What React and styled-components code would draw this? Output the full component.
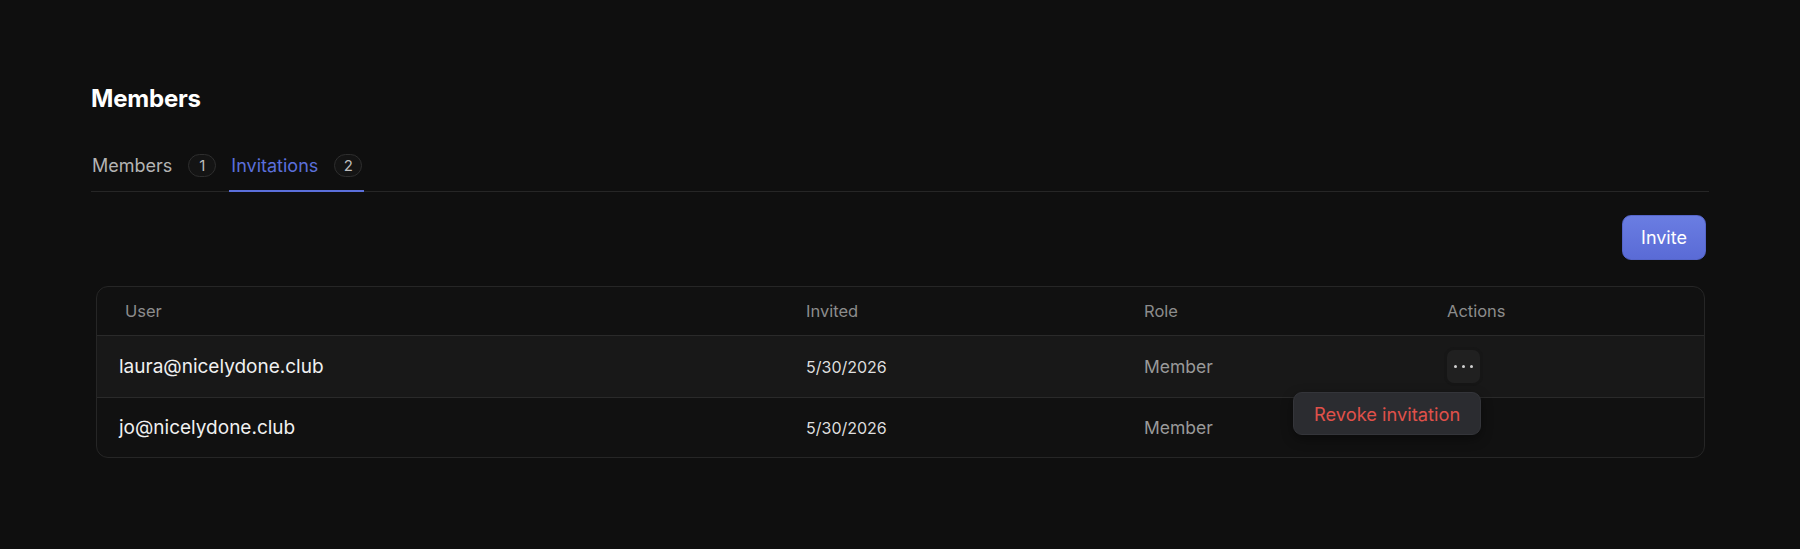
import styled, { createGlobalStyle } from "styled-components";

const GlobalStyle = createGlobalStyle`
  html, body {
    margin: 0;
    background: #0f0f0f;
    font-family: Inter, "Noto Sans", sans-serif;
    color: #f2f2f2;
  }
`;

const invitations = [
  { email: "laura@nicelydone.club", invited: "5/30/2026", role: "Member", active: true },
  { email: "jo@nicelydone.club", invited: "5/30/2026", role: "Member" },
];

export default function App() {
  return (
    <>
      <GlobalStyle />
      <Page>
        <Title>Members</Title>
        <Tabs>
          <Tab>
            Members <Count>1</Count>
          </Tab>
          <Tab $active>
            Invitations <Count>2</Count>
          </Tab>
        </Tabs>
        <Toolbar>
          <InviteButton>Invite</InviteButton>
        </Toolbar>
        <Table>
          <HeadRow>
            <HeadCell $first>User</HeadCell>
            <HeadCell>Invited</HeadCell>
            <HeadCell>Role</HeadCell>
            <HeadCell>Actions</HeadCell>
          </HeadRow>
          {invitations.map((inv) => (
            <Row key={inv.email} $active={inv.active}>
              <Email>{inv.email}</Email>
              <DateCell>{inv.invited}</DateCell>
              <RoleCell>{inv.role}</RoleCell>
              <ActionCell>
                {inv.active && (
                  <>
                    <DotsButton aria-label="Actions">
                      <Dot />
                      <Dot />
                      <Dot />
                    </DotsButton>
                    <Menu>
                      <MenuItem>Revoke invitation</MenuItem>
                    </Menu>
                  </>
                )}
              </ActionCell>
            </Row>
          ))}
        </Table>
      </Page>
    </>
  );
}

const Page = styled.div`
  padding: 84px 91px 0 91px;
  width: 1618px;
`;

const Title = styled.h1`
  margin: 0;
  font-size: 24px;
  font-weight: 700;
  line-height: 30px;
  color: #ffffff;
  letter-spacing: -0.2px;
`;

const Tabs = styled.div`
  display: flex;
  margin-top: 30px;
  border-bottom: 1px solid #262626;
`;

const Tab = styled.div`
  display: flex;
  align-items: center;
  gap: 16px;
  height: 48px;
  box-sizing: border-box;
  padding: 0 ${(p) => (p.$active ? "2px" : "13px")} 6px ${(p) => (p.$active ? "2px" : "1px")};
  font-size: 18px;
  color: ${(p) => (p.$active ? "#5b6fdb" : "#b4b4b4")};
  box-shadow: ${(p) => (p.$active ? "inset 0 -2px 0 #5b6fdb" : "none")};
  margin-bottom: -1px;
`;

const Count = styled.span`
  display: inline-flex;
  align-items: center;
  justify-content: center;
  width: 28px;
  height: 23px;
  box-sizing: border-box;
  border: 1px solid #2e2e2e;
  border-radius: 12px;
  font-size: 15px;
  color: #bdbdbd;
  background: #141414;
`;

const Toolbar = styled.div`
  display: flex;
  justify-content: flex-end;
  padding: 23px 3px 0 0;
`;

const InviteButton = styled.button`
  width: 84px;
  height: 45px;
  border: 1px solid #5565c9;
  border-radius: 9px;
  background: linear-gradient(#6a7de2, #5a6bd6);
  color: #ffffff;
  font-family: Inter, sans-serif;
  font-size: 18px;
`;

const Table = styled.div`
  margin: 26px 4px 0 5px;
  border: 1px solid #262626;
  border-radius: 12px;
  background: #111111;
`;

const columns = "709px 338px 303px 1fr";

const HeadRow = styled.div`
  display: grid;
  grid-template-columns: ${columns};
  height: 48px;
  align-items: center;
  border-bottom: 1px solid #2a2a2a;
`;

const HeadCell = styled.div`
  font-size: 16.5px;
  color: #8c8c8c;
  padding-left: ${(p) => (p.$first ? "28px" : "0")};
`;

const Row = styled.div`
  display: grid;
  grid-template-columns: ${columns};
  height: ${(p) => (p.$active ? "61px" : "59px")};
  align-items: center;
  background: ${(p) => (p.$active ? "#181818" : "transparent")};
  border-bottom: ${(p) => (p.$active ? "1px solid #2a2a2a" : "none")};
  border-radius: ${(p) => (p.$active ? "0" : "0 0 12px 12px")};
`;

const Email = styled.div`
  padding-left: 22px;
  font-size: 19px;
  color: #f0f0f0;
`;

const DateCell = styled.div`
  font-size: 16px;
  color: #dedede;
`;

const RoleCell = styled.div`
  font-size: 17.5px;
  color: #9a9a9a;
`;

const ActionCell = styled.div`
  position: relative;
  height: 100%;
  display: flex;
  align-items: center;
`;

const DotsButton = styled.button`
  width: 33px;
  height: 33px;
  display: flex;
  align-items: center;
  justify-content: center;
  gap: 5px;
  padding: 0;
  border: none;
  border-radius: 7px;
  background: #202020;
  box-shadow: 0 0 0 3px #161616;
`;

const Dot = styled.span`
  width: 3px;
  height: 3px;
  border-radius: 50%;
  background: #d0d0d0;
`;

const Menu = styled.div`
  position: absolute;
  top: 56px;
  right: calc(100% - 34px);
  width: 188px;
  height: 43px;
  box-sizing: border-box;
  display: flex;
  align-items: center;
  padding-left: 20px;
  background: #2b2c30;
  border: 1px solid #34353a;
  border-radius: 9px;
  box-shadow: 0 4px 12px rgba(0, 0, 0, 0.4);
  z-index: 2;
`;

const MenuItem = styled.span`
  font-size: 18.3px;
  color: #e0514a;
`;
